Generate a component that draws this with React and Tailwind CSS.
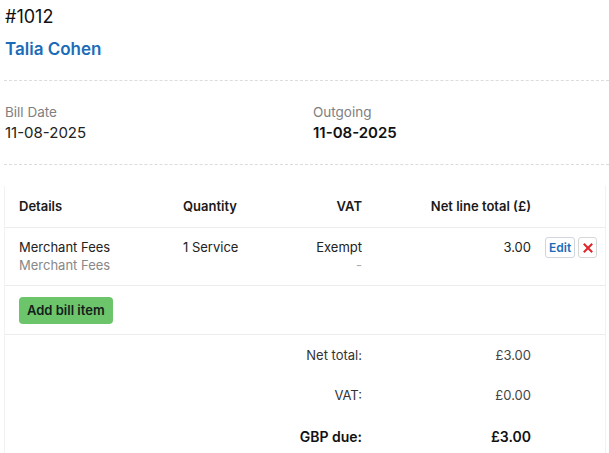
export default function App() {
  const font = { fontFamily: 'Inter, "Noto Sans", sans-serif' };
  return (
    <div className="w-[609px] h-[453px] bg-white text-[#222] overflow-hidden" style={font}>
      <div className="pl-[5px] pt-[5px]">
        <div className="text-[18px] leading-[24px] text-[#111]">#1012</div>
        <div className="mt-[8px] text-[17px] leading-[24px] font-semibold text-[#1b6cb8]">Talia Cohen</div>
      </div>
      <div className="ml-[4px] mt-[19px] border-t border-dashed border-[#dcdcdc]" />
      <div className="flex pl-[5px] pt-[22px]">
        <div className="w-[308px]">
          <div className="text-[13.5px] leading-[18px] text-[#808080]">Bill Date</div>
          <div className="mt-[2px] text-[15px] leading-[20px] text-[#222]">11-08-2025</div>
        </div>
        <div>
          <div className="text-[13.5px] leading-[18px] text-[#808080]">Outgoing</div>
          <div className="mt-[2px] text-[15px] leading-[20px] font-semibold text-[#111]">11-08-2025</div>
        </div>
      </div>
      <div className="ml-[4px] mt-[21px] border-t border-dashed border-[#dcdcdc]" />
      <div className="ml-[4px] mr-[3px] mt-[21px] border-x border-[#f2f2f2] h-[300px]">
        <div className="grid grid-cols-[164px_80px_99px_169px_1fr] pl-[14px] h-[42px] items-center text-[13px] font-semibold text-[#1a1a1a] border-b border-[#ececec]">
          <div>Details</div>
          <div>Quantity</div>
          <div className="text-right">VAT</div>
          <div className="text-right">Net line total (£)</div>
          <div />
        </div>
        <div className="grid grid-cols-[164px_80px_99px_169px_1fr] pl-[14px] h-[58px] pt-[10px] text-[13px] leading-[18px] border-b border-[#ececec]">
          <div>
            <div className="text-[#222]">Merchant Fees</div>
            <div className="text-[#888]">Merchant Fees</div>
          </div>
          <div className="text-[#222]">1 Service</div>
          <div className="text-right">
            <div className="text-[#222]">Exempt</div>
            <div className="text-[#aaa]">-</div>
          </div>
          <div className="text-right text-[#222]">3.00</div>
          <div className="flex gap-[3px] pl-[14px] -mt-[1px] items-start">
            <button className="h-[21px] px-[3px] border border-[#cfd6de] rounded-[3px] text-[12px] leading-[19px] font-semibold text-[#1b6cb8] bg-white">Edit</button>
            <button className="h-[21px] w-[19px] border border-[#d6d6d6] rounded-[3px] flex items-center justify-center bg-white">
              <svg width="10" height="10" viewBox="0 0 10 10">
                <path d="M1.5 1.5 L8.5 8.5 M8.5 1.5 L1.5 8.5" stroke="#e0242a" strokeWidth="2" strokeLinecap="square" />
              </svg>
            </button>
          </div>
        </div>
        <div className="pl-[14px] h-[49px] pt-[11px] border-b border-[#ececec]">
          <button className="h-[27px] px-[8px] rounded-[4px] bg-[#6cc56b] text-[13px] font-semibold text-[#14201a]">Add bill item</button>
        </div>
        <div className="grid grid-cols-[357px_169px] text-[13px]">
          <div className="text-right h-[40px] leading-[40px] text-[#333]">Net total:</div>
          <div className="text-right h-[40px] leading-[40px] text-[#444]">£3.00</div>
          <div className="text-right h-[40px] leading-[40px] text-[#333]">VAT:</div>
          <div className="text-right h-[40px] leading-[40px] text-[#444]">£0.00</div>
          <div className="text-right h-[44px] leading-[44px] text-[14px] font-semibold text-[#111]">GBP due:</div>
          <div className="text-right h-[44px] leading-[44px] text-[14px] font-semibold text-[#111]">£3.00</div>
        </div>
      </div>
    </div>
  );
}
